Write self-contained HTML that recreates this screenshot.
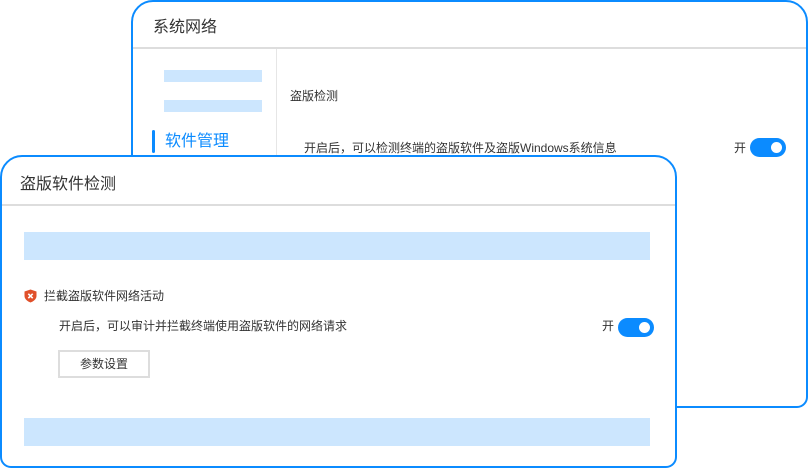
<!DOCTYPE html><html><head><meta charset="utf-8"><style>
body{margin:0;width:808px;height:468px;background:#fff;position:relative;overflow:hidden;font-family:"Liberation Sans","Noto Sans CJK SC",sans-serif;color:#333}
.p{position:absolute;box-sizing:border-box;border:2px solid #0b8bff;background:#fff;border-radius:22px 22px 11px 11px}
.a{position:absolute}
.bar{position:absolute;background:#cce6fe}
.tg{position:absolute;width:36px;height:19px;border-radius:10px;background:#0b8bff}
.tg:after{content:"";position:absolute;right:4px;top:4px;width:11px;height:11px;border-radius:50%;background:#fff}
</style></head><body>
<div class="p" style="left:131px;top:0;width:677px;height:408px"></div>
<div class="a" style="left:133px;top:47px;width:673px;height:2px;background:#ddd"></div>
<div class="a" style="left:276px;top:49px;width:1px;height:110px;background:#e6e6e6"></div>
<div class="a" style="left:153px;top:18px;font-size:16px;line-height:20px">系统网络</div>
<div class="bar" style="left:164px;top:70px;width:98px;height:12px"></div>
<div class="bar" style="left:164px;top:100px;width:98px;height:12px"></div>
<div class="a" style="left:152px;top:130px;width:3px;height:23px;background:#0b8bff;border-radius:2px"></div>
<div class="a" style="left:165px;top:132px;font-size:16px;line-height:20px;color:#0b8bff">软件管理</div>
<div class="a" style="left:290px;top:88px;font-size:12px;line-height:16px">盗版检测</div>
<div class="a" style="left:304px;top:140px;font-size:12px;line-height:16px">开启后，可以检测终端的盗版软件及盗版Windows系统信息</div>
<div class="a" style="left:734px;top:140px;font-size:12px;line-height:16px">开</div>
<div class="tg" style="left:750px;top:138px"></div>

<div class="p" style="left:0;top:155px;width:677px;height:313px"></div>
<div class="a" style="left:2px;top:204px;width:673px;height:2px;background:#ddd"></div>
<div class="a" style="left:20px;top:175px;font-size:16px;line-height:20px">盗版软件检测</div>
<div class="bar" style="left:24px;top:232px;width:626px;height:28px"></div>
<svg class="a" style="left:24px;top:289px" width="13" height="14" viewBox="0 0 13 14"><path d="M6.5 0.5L12.5 2.5V7C12.5 10 9.5 12.5 6.5 13.5C3.5 12.5 0.5 10 0.5 7V2.5Z" fill="#e0502a"/><path d="M4.3 4.8L8.7 9.2M8.7 4.8L4.3 9.2" stroke="#fff" stroke-width="1.6"/></svg>
<div class="a" style="left:44px;top:288px;font-size:12px;line-height:16px">拦截盗版软件网络活动</div>
<div class="a" style="left:59px;top:318px;font-size:12px;line-height:16px">开启后，可以审计并拦截终端使用盗版软件的网络请求</div>
<div class="a" style="left:602px;top:318px;font-size:12px;line-height:16px">开</div>
<div class="tg" style="left:618px;top:318px"></div>
<div class="a" style="left:58px;top:350px;width:92px;height:28px;box-sizing:border-box;border:2px solid #ddd;font-size:12px;line-height:24px;text-align:center">参数设置</div>
<div class="bar" style="left:24px;top:418px;width:626px;height:28px"></div>
</body></html>
